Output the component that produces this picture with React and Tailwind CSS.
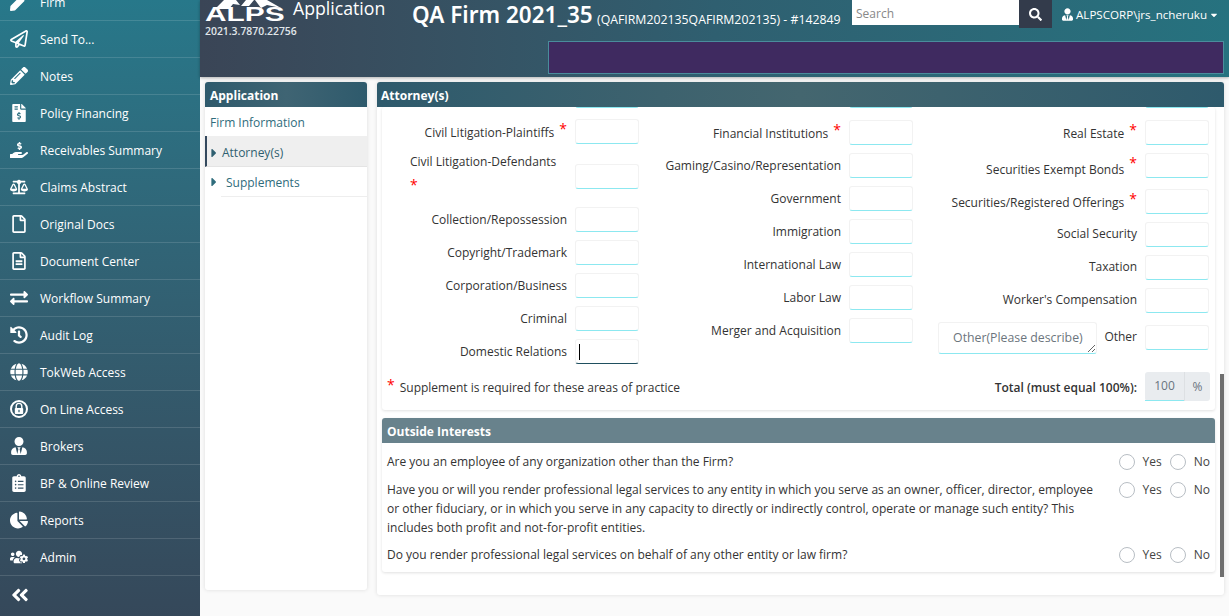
import React from 'react';
import {
  FaPen, FaRegPaperPlane, FaPencilAlt, FaFileInvoiceDollar, FaHandHoldingUsd, FaBalanceScale,
  FaRegFile, FaRegFileAlt, FaExchangeAlt, FaHistory, FaGlobe, FaUserTie, FaClipboardList,
  FaChartPie, FaUsersCog, FaAngleDoubleLeft, FaSearch, FaCaretDown, FaCaretRight,
} from 'react-icons/fa';

// circle + padlock for "On Line Access"
const LockGlobe = ({ className }) => (
  <svg viewBox="0 0 18 18" width="18" height="18" className={className}>
    <circle cx="9" cy="9" r="8" fill="none" stroke="#fff" strokeWidth="2" />
    <path d="M6.2 8V6.2a2.8 2.8 0 0 1 5.6 0V8" fill="none" stroke="#fff" strokeWidth="1.4" />
    <rect x="4.8" y="8" width="8.4" height="6" rx="0.8" fill="#fff" />
    <rect x="8.4" y="9.8" width="1.2" height="2.4" fill="#2f5f70" />
  </svg>
);

const menu = [
  ['Firm', FaPen],
  ['Send To...', FaRegPaperPlane],
  ['Notes', FaPencilAlt],
  ['Policy Financing', FaFileInvoiceDollar],
  ['Receivables Summary', FaHandHoldingUsd],
  ['Claims Abstract', FaBalanceScale],
  ['Original Docs', FaRegFile],
  ['Document Center', FaRegFileAlt],
  ['Workflow Summary', FaExchangeAlt],
  ['Audit Log', FaHistory],
  ['TokWeb Access', FaGlobe],
  ['On Line Access', LockGlobe],
  ['Brokers', FaUserTie],
  ['BP & Online Review', FaClipboardList],
  ['Reports', FaChartPie],
  ['Admin', FaUsersCog],
];

const colOne = ['Collection/Repossession', 'Copyright/Trademark', 'Corporation/Business', 'Criminal'];

const colTwo = [
  ['Financial Institutions', true, 'mt-[12px]', 'pt-[2px]'],
  ['Gaming/Casino/Representation'],
  ['Government'],
  ['Immigration'],
  ['International Law'],
  ['Labor Law'],
  ['Merger and Acquisition'],
];

const colThree = [
  ['Real Estate', true, 'mt-[12px]', 'pt-[2px]'],
  ['Securities Exempt Bonds', true, 'mt-2', 'pt-[9px]'],
  ['Securities/Registered Offerings', true, 'mt-[11px]', 'pt-[2px]'],
  ['Social Security', false, 'mt-2', 'pb-[2px]'],
  ['Taxation', false, 'mt-2', 'pb-[2px]'],
  ["Worker's Compensation", false, 'mt-2', 'pb-[2px]'],
];

const questions = [
  'Are you an employee of any organization other than the Firm?',
  'Have you or will you render professional legal services to any entity in which you serve as an owner, officer, director, employee or other fiduciary, or in which you serve in any capacity to directly or indirectly control, operate or manage such entity? This includes both profit and not-for-profit entities.',
  'Do you render professional legal services on behalf of any other entity or law firm?',
];

const Star = () => <span className="text-[#f00] text-[14px] leading-[12px] ml-[5px] relative top-[-3px]">*</span>;

const Box = ({ focused }) => (
  <div className={`w-[64px] h-[25px] shrink-0 bg-white rounded-[3px] border border-[#f2f2f2] ${focused ? 'border-b-[#1f4f5f] flex items-center pl-[3px]' : 'border-b-[#8ce8f0]'}`}>
    {focused && <div className="w-px h-[16px] bg-black" />}
  </div>
);

const Field = ({ label, star, focused, mt, labelClass }) => (
  <div className={`flex items-center justify-end h-[25px] ${mt || 'mt-2'}`}>
    <span className={`whitespace-nowrap text-[#333] ${labelClass || ''}`}>{label}</span>
    {star && <Star />}
    <div className="w-2 shrink-0" />
    <Box focused={focused} />
  </div>
);

const Radio = ({ label }) => (
  <div className="flex items-center">
    <span className="w-[16px] h-[16px] rounded-full border border-[#b8bec4] bg-white shrink-0" />
    <span className="ml-[8px] text-[#444]">{label}</span>
  </div>
);

const App = () => {
  return (
    <div className="flex h-[616px] w-[1229px] overflow-hidden bg-[#fafafa] text-[12px] text-[#333] font-['Open_Sans','Noto_Sans',sans-serif]">
      {/* Sidebar */}
      <div className="w-[200px] shrink-0 h-full overflow-hidden bg-gradient-to-b from-[#27788a] to-[#35485a] text-white">
        <div className="-mt-[16px]">
          {menu.map(([name, Icon]) => (
            <div key={name} className="h-[37px] flex items-center border-b border-[#ffffff22] pl-[10px]">
              <div className="w-[30px] shrink-0">
                <Icon className="h-[18px] w-auto" />
              </div>
              <span className="whitespace-nowrap pt-[1px]">{name}</span>
            </div>
          ))}
          <div className="h-[37px] flex items-center pl-[10px]">
            <FaAngleDoubleLeft className="w-[20px] h-[20px]" />
          </div>
        </div>
      </div>

      <div className="flex-1 flex flex-col min-w-0">
        {/* Header */}
        <div className="h-[77px] shrink-0 bg-gradient-to-r from-[#3a4556] via-[#2f5f70] to-[#26727f] text-white flex shadow-[0_1px_3px_rgba(0,0,0,0.3)] overflow-hidden">
          <div className="w-[205px] shrink-0 pl-[5px]">
            <div className="flex items-start h-[25px]">
              <div className="w-[82px] h-[24px] shrink-0 relative">
                <svg width="68" height="9" viewBox="0 0 68 9" className="absolute left-[10px] top-0">
                  <path d="M0 9 L9 0 L21 0 L25 5 L18 4 L14 9 Z M26 6 L31 0 L39 0 L34 6 Z M40 0 L52 0 L66 8 L52 5 L46 8 Z" fill="#fff" />
                </svg>
                <span className="absolute left-0 top-[3px] font-['Liberation_Sans',sans-serif] font-bold text-[21px] leading-[21px] scale-x-[1.42] origin-left">ALPS</span>
              </div>
              <span className="text-[17.7px] leading-[17px] ml-[6px]">Application</span>
            </div>
            <div className="text-[10.4px] leading-[13px] font-semibold text-[#e0e6ea]">2021.3.7870.22756</div>
          </div>
          <div className="flex-1 min-w-0 flex flex-col">
            <div className="flex items-start h-[28px]">
              <span className="w-[185px] shrink-0 text-[22.5px] leading-[30px] font-semibold ml-[7px] whitespace-nowrap font-['Noto_Sans',sans-serif]">QA Firm 2021_35</span>
              <span className="w-[255px] shrink-0 text-[12.3px] leading-[12px] mt-[14px] whitespace-nowrap">(QAFIRM202135QAFIRM202135) - #142849</span>
              <div className="w-[167px] h-[25px] bg-white text-[#888] pl-[4px] pt-[2px] flex items-center">Search</div>
              <div className="w-[33px] h-[28px] bg-[#333b4b] flex items-center justify-center">
                <FaSearch className="w-[13px] h-[13px]" />
              </div>
              <div className="ml-[10px] flex items-center h-[29px] whitespace-nowrap text-[11.6px]">
                <FaUserTie className="w-[11px] h-[13px] mr-[3px]" />
                ALPSCORP\jrs_ncheruku
                <FaCaretDown className="w-[10px] h-[10px] ml-[2px]" />
              </div>
            </div>
            <div className="ml-[143px] mr-[5px] mt-[13px] h-[33px] bg-[#3f2a60] border border-[#4a8c9c]" />
          </div>
        </div>

        {/* Body */}
        <div className="flex-1 min-h-0 flex items-start pl-[5px] pr-[5px] pt-[5px] gap-[10px]">
          {/* Left panel */}
          <div className="w-[162px] h-[508px] shrink-0 bg-white shadow-[0_0_4px_rgba(0,0,0,0.12)] rounded-[3px] overflow-hidden">
            <div className="h-[25px] flex items-center pl-[5px] pt-[2px] font-bold text-white bg-gradient-to-r from-[#2e5a6c] via-[#3f6473] to-[#2e5a6c]">Application</div>
            <div className="h-[29px] flex items-center pl-[5px] pt-[3px] text-[#2f6c7c]">Firm Information</div>
            <div className="h-[31px] flex items-center pt-[3px] bg-[#efefef] border-l-2 border-[#34495e] border-b border-b-[#e4e4e4] text-[#2f5f70]">
              <FaCaretRight className="w-[14px] h-[14px] mr-0 ml-0" />
              <span className="ml-[1px]">Attorney(s)</span>
            </div>
            <div className="h-[30px] flex items-center text-[#2f6c7c]">
              <FaCaretRight className="w-[14px] h-[14px] ml-[2px] mr-0" />
              <span className="flex-1 h-full flex items-center pt-[3px] border-b border-[#eeeeee] pl-[5px]">Supplements</span>
            </div>
          </div>

          {/* Right panel */}
          <div className="flex-1 min-w-0 h-[513px] bg-white shadow-[0_0_4px_rgba(0,0,0,0.12)] rounded-[3px] overflow-hidden flex flex-col">
            <div className="h-[25px] shrink-0 flex items-center pl-[4px] pt-[2px] font-bold text-white bg-gradient-to-r from-[#2e5a6c] via-[#44666f] to-[#2e5a6c]">Attorney(s)</div>
            <div className="flex-1 min-h-0 flex overflow-hidden">
              <div className="flex-1 min-w-0 pl-[5px] pr-[5px] overflow-hidden">
                {/* Areas of practice card */}
                <div className="h-[303px] bg-white shadow-[0_1px_3px_rgba(0,0,0,0.12)] rounded-[3px] overflow-hidden">
                  <div className="flex">
                    <div className="w-[257px] shrink-0 -mt-[24px]">
                      <Field label="" mt="mt-0" />
                      <Field label="Civil Litigation-Plaintiffs" star mt="mt-[11px]" labelClass="pt-[2px]" />
                      <div className="flex items-start justify-end h-[55px]">
                        <div className="w-[165px] text-[#333] leading-[23px] pt-[6px]">
                          Civil Litigation-Defendants
                          <div className="text-[#f00] text-[14px] leading-[23px]">*</div>
                        </div>
                        <div className="mt-[20px]"><Box /></div>
                      </div>
                      {colOne.map((label) => <Field key={label} label={label} />)}
                      <Field label="Domestic Relations" focused />
                    </div>
                    <div className="w-[274px] shrink-0 -mt-[24px]">
                      <Field label="" mt="mt-0" />
                      {colTwo.map(([label, star, mt, labelClass]) => <Field key={label} label={label} star={star} mt={mt} labelClass={labelClass} />)}
                    </div>
                    <div className="w-[296px] shrink-0 -mt-[24px]">
                      <Field label="" mt="mt-0" />
                      {colThree.map(([label, star, mt, labelClass]) => <Field key={label} label={label} star={star} mt={mt} labelClass={labelClass} />)}
                      <div className="flex items-center justify-end h-[25px] mt-[12px]">
                        <textarea readOnly placeholder="Other(Please describe)" className="w-[159px] h-[32px] mr-[7px] px-[8px] py-[6px] text-[12.3px] leading-[18px] text-center placeholder:text-[#6c757d] border border-[#f2f2f2] border-b-[#8ce8f0] rounded-[3px] outline-none mt-[1px]" />
                        <span className="pb-[1px]">Other</span>
                        <div className="w-2 shrink-0" />
                        <Box />
                      </div>
                    </div>
                  </div>
                  <div className="flex items-center justify-between h-[29px] mt-[8px] pl-[5px] pr-[5px]">
                    <div className="flex items-center pt-[3px]">
                      <span className="text-[#f00] text-[14px] leading-[12px] mr-[5px] relative top-[-3px]">*</span>
                      Supplement is required for these areas of practice
                    </div>
                    <div className="flex items-center">
                      <span className="font-semibold mr-[8px] pt-[2px]">Total (must equal 100%):</span>
                      <div className="w-[65px] h-[29px] bg-[#e9ecef] rounded-[3px] flex text-[#6a7480]">
                        <div className="w-[39px] border-b border-[#8ce8f0] flex items-center justify-center">100</div>
                        <div className="flex-1 border-l border-[#dde0e3] flex items-center justify-center">%</div>
                      </div>
                    </div>
                  </div>
                </div>

                {/* Outside interests */}
                <div className="mt-[8px] bg-white shadow-[0_1px_3px_rgba(0,0,0,0.12)] rounded-[3px] overflow-hidden">
                  <div className="h-[25px] flex items-center pl-[5px] pt-[2px] font-bold text-white bg-[#68828c]">Outside Interests</div>
                  <div className="px-[5px] pt-[9px]">
                    {questions.map((q, i) => (
                      <div key={i} className={`flex items-start justify-between leading-[19px] ${i === 0 ? 'mb-[9px]' : 'mb-[8px]'}`}>
                        <div className="w-[720px]">{q}</div>
                        <div className="flex items-center gap-[8px] shrink-0 h-[19px]">
                          <Radio label="Yes" />
                          <Radio label="No" />
                        </div>
                      </div>
                    ))}
                  </div>
                </div>
              </div>
              {/* Scrollbar */}
              <div className="w-[4px] shrink-0 flex flex-col">
                <div className="h-[267px]" />
                <div className="h-[203px] bg-[#6f6f6f]" />
              </div>
            </div>
          </div>
        </div>
      </div>
    </div>
  );
};

export default App;
